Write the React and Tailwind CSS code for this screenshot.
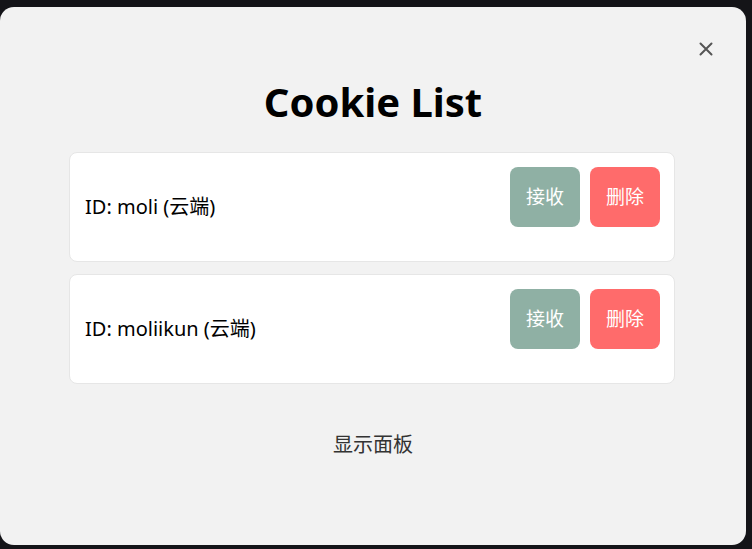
import React from 'react';

const cookies = [
  { id: 'moli', source: '云端' },
  { id: 'moliikun', source: '云端' },
];

function CookieRow({ item }) {
  return (
    <div className="flex h-[110px] items-start justify-between rounded-lg border border-[#e6e6e6] bg-white pl-[15px] pr-[14px] py-[14px]">
      <span className="self-center text-[20px] text-black">
        ID: {item.id} ({item.source})
      </span>
      <div className="flex gap-[10px]">
        <button className="h-[60px] w-[70px] rounded-lg bg-[#8fb0a4] text-[19px] text-white">接收</button>
        <button className="h-[60px] w-[70px] rounded-lg bg-[#ff6b6b] text-[19px] text-white">删除</button>
      </div>
    </div>
  );
}

export default function App() {
  return (
    <div
      className="h-[549px] w-[752px] overflow-hidden bg-[#141418] pt-[7px] pr-[6px] pb-[4px]"
      style={{ fontFamily: '"Noto Sans", "Noto Sans CJK SC", sans-serif' }}
    >
      <div className="relative flex h-full flex-col items-center rounded-[14px] bg-[#f2f2f2]">
        <button className="absolute right-[29px] top-[31px] text-[#555]">
          <svg width="22" height="22" viewBox="0 0 24 24" fill="none" stroke="currentColor" strokeWidth="2.2" strokeLinecap="round">
            <path d="M6 6l12 12M18 6L6 18" />
          </svg>
        </button>

        <h1 className="mt-[67px] text-[40px] font-bold leading-[56px] text-black">Cookie List</h1>

        <div className="mt-[22px] flex w-[606px] flex-col gap-3 self-start ml-[69px]">
          {cookies.map((c) => (
            <CookieRow key={c.id} item={c} />
          ))}
        </div>

        <button className="mt-[46px] text-[20px] text-[#333]">显示面板</button>
      </div>
    </div>
  );
}
